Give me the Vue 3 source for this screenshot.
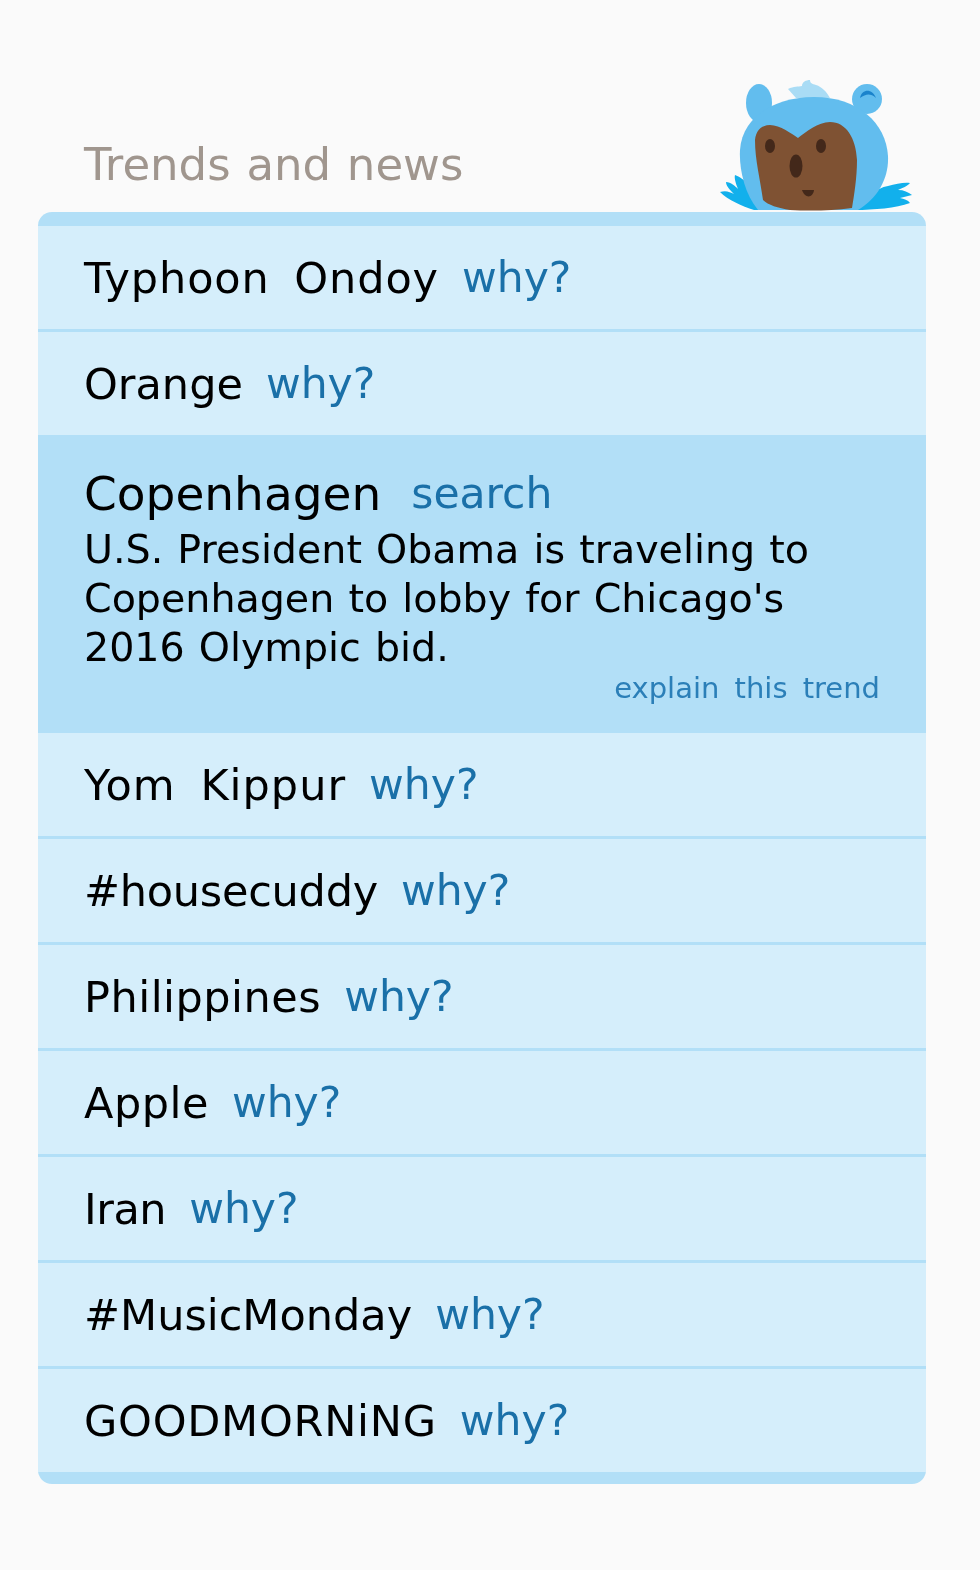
<script setup>
const before = [
  { name: 'Typhoon Ondoy', track: 0.9 },
  { name: 'Orange', track: 0 },
]
const after = [
  { name: 'Yom Kippur', track: 1 },
  { name: '#housecuddy', track: -0.25 },
  { name: 'Philippines', track: 0.5 },
  { name: 'Apple', track: 0.5 },
  { name: 'Iran', track: -0.45 },
  { name: '#MusicMonday', track: 0 },
  { name: 'GOODMORNiNG', track: 0.75 },
]
</script>

<template>
  <div class="page">
    <div class="head">
      <h2 class="title">Trends and news</h2>
      <svg class="bear" width="196" height="134" viewBox="0 0 196 134" aria-hidden="true">
        <path d="M70 11 C76 8 80 9 84 8 C84 4 88 2 92 2 C92 5 94 6 98 7 C104 9 108 13 112 20 L78 20 Z" fill="#a9dcf5"/>
        <path d="M2 114 C8 112 12 114 16 116 C12 112 8 108 8 104 C13 104 17 108 20 111 C18 106 16 100 17 97 C26 100 36 110 46 132 L36 132 C24 128 10 122 2 114 Z" fill="#12b0ec"/>
        <path d="M137 132 C148 120 158 110 170 108 C178 106 186 104 192 105 C190 108 184 110 180 112 C186 112 190 114 194 117 C190 118 186 119 182 120 C186 121 190 122 192 125 C178 130 156 132 137 132 Z" fill="#12b0ec"/>
        <ellipse cx="41" cy="25" rx="13" ry="19" fill="#62bdee"/>
        <circle cx="149" cy="21" r="15" fill="#62bdee"/>
        <path d="M142 20 C144 11 154 10 158 20 C152 15 148 16 142 20 Z" fill="#1a83cc"/>
        <path d="M40 132 C26 115 21 90 22 72 C24 40 55 19 96 19 C140 19 168 45 170 78 C171 100 160 120 140 132 Z" fill="#62bdee"/>
        <path d="M37 62 C38 52 44 47 52 47 C62 47 74 56 80 60 C88 54 100 44 112 44 C128 44 138 60 139 82 C139 100 136 118 134 130 C112 133 90 133 72 132 C60 130 50 127 45 122 C42 100 37 82 37 62 Z" fill="#7f5233"/>
        <ellipse cx="52" cy="68" rx="5" ry="7" fill="#43281a"/>
        <ellipse cx="103" cy="68" rx="5" ry="7" fill="#43281a"/>
        <ellipse cx="78" cy="88" rx="6.5" ry="11.5" fill="#43281a"/>
        <path d="M84 112 L96 112 C95 120 87 121 84 112 Z" fill="#43281a"/>
      </svg>
    </div>
    <div class="card">
      <ul class="list">
        <li v-for="t in before" :key="t.name" class="row">
          <a class="name" :style="{ letterSpacing: t.track + 'px' }">{{ t.name }}</a><a class="why">why?</a>
        </li>
        <li class="selected">
          <div class="sel-head"><a class="name">Copenhagen</a><a class="search">search</a></div>
          <p class="desc">U.S. President Obama is traveling to Copenhagen to lobby for Chicago's 2016 Olympic bid.</p>
          <div class="explain"><a>explain this trend</a></div>
        </li>
        <li v-for="t in after" :key="t.name" class="row">
          <a class="name" :style="{ letterSpacing: t.track + 'px' }">{{ t.name }}</a><a class="why">why?</a>
        </li>
      </ul>
    </div>
  </div>
</template>

<style>
html, body { margin: 0; background: #fafafa; }
</style>

<style scoped>
.page {
  width: 980px;
  height: 1570px;
  box-sizing: border-box;
  padding: 78px 54px 0 38px;
  background: #fafafa;
  font-family: "DejaVu Sans", sans-serif;
  overflow: hidden;
  filter: blur(0.7px);
}
.head {
  height: 134px;
  display: flex;
  justify-content: space-between;
  align-items: flex-end;
  padding: 0 0 0 46px;
  position: relative;
}
.title {
  margin: 0 0 23px;
  font-size: 45px;
  line-height: 48px;
  font-weight: 400;
  word-spacing: 1.5px;
  color: #a0968e;
}
.bear {
  position: absolute;
  right: 12px;
  bottom: 0;
}
.card {
  width: 888px;
  border-radius: 14px;
  background: #b2dff7;
  padding: 14px 0 12px;
}
.list {
  margin: 0;
  padding: 0;
  list-style: none;
}
.row {
  height: 103px;
  padding: 0 46px;
  display: flex;
  align-items: center;
  background: #d5eefb;
  border-bottom: 3px solid #b2dff7;
}
.row:last-child, .row:nth-child(2) { border-bottom: 0; }
.name { font-size: 43px; word-spacing: 10px; color: #000; }
.why { font-size: 42.5px; color: #1a70a8; margin-left: 23px; }
.selected {
  height: 298px;
  box-sizing: border-box;
  padding: 28px 46px 0;
  background: #b2dff7;
}
.sel-head { display: flex; align-items: center; height: 60px; }
.sel-head .name { font-size: 47px; }
.search { font-size: 42.5px; color: #1a70a8; margin-left: 30px; }
.desc {
  margin: 2px 0 0;
  max-width: 780px;
  font-size: 39.6px;
  line-height: 49px;
  word-spacing: 1.5px;
  color: #000;
}
.explain {
  text-align: right;
  margin-top: -2px;
  font-size: 29px;
  line-height: 36px;
  word-spacing: 6px;
  color: #2b7fb8;
}
</style>
